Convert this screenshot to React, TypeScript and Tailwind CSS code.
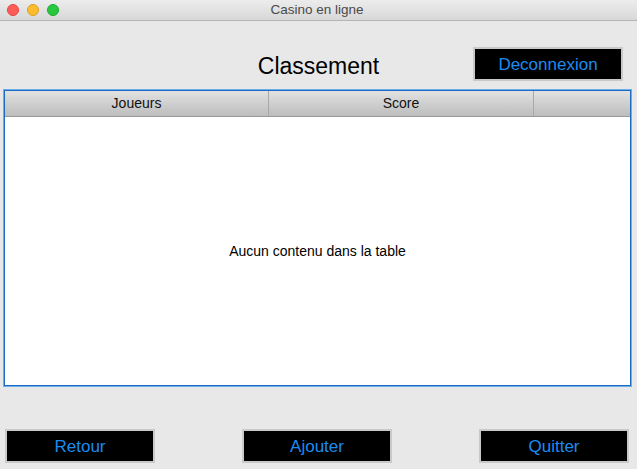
import React from 'react';

const ActionButton: React.FC<{ label: string; className?: string }> = ({ label, className = '' }) => (
  <button
    type="button"
    className={`w-[150px] h-[34px] bg-black border-2 border-[#c9c9c9] text-[#1a8cf0] text-[17px] leading-none ${className}`}
  >
    {label}
  </button>
);

const App: React.FC = () => {
  return (
    <div className="w-[637px] h-[469px] bg-[#e8e8e8] flex flex-col overflow-hidden font-['Liberation_Sans',Arial,sans-serif]">
      {/* barre de titre */}
      <div className="h-[21px] shrink-0 flex items-center px-[7px] bg-gradient-to-b from-[#ececec] to-[#d8d8d8] border-b border-[#b4b4b4] relative">
        <div className="flex gap-[8px]">
          <span className="w-[12px] h-[12px] rounded-full bg-[#fc5b57] border border-[#e2463f]" />
          <span className="w-[12px] h-[12px] rounded-full bg-[#fdbc2e] border border-[#df9f1f]" />
          <span className="w-[12px] h-[12px] rounded-full bg-[#28c840] border border-[#1aab29]" />
        </div>
        <span className="absolute inset-x-0 text-center text-[13.5px] text-[#4a4a4a] pr-[3px]">Casino en ligne</span>
      </div>

      {/* en-tête */}
      <div className="h-[68px] shrink-0 grid grid-cols-[1fr_auto_1fr] items-end">
        <div />
        <h1 className="text-[23px] leading-[25px] text-black mb-[10px]">Classement</h1>
        <div className="flex justify-end pr-[14px] pb-[8px]">
          <ActionButton label="Deconnexion" className="h-[33px]" />
        </div>
      </div>

      {/* table */}
      <div className="ml-[3px] mr-[5px] h-[298px] shrink-0 border border-[#6aaeea] flex flex-col">
        <div className="flex-1 border border-[#1b6bc2] bg-white flex flex-col">
          <div className="h-[26px] shrink-0 flex bg-gradient-to-b from-[#e2e2e2] to-[#bdbdbd] border-b border-[#9a9a9a] text-[14px] text-[#111]">
            <div className="w-[264px] flex items-center justify-center border-r border-[#a8a8a8]">Joueurs</div>
            <div className="w-[265px] flex items-center justify-center border-r border-[#a8a8a8]">Score</div>
            <div className="flex-1" />
          </div>
          <div className="flex-1 flex items-center justify-center text-[14px] text-black">
            Aucun contenu dans la table
          </div>
        </div>
      </div>

      {/* boutons du bas */}
      <div className="flex-1 flex items-end justify-between pl-[5px] pr-[8px] pb-[6px]">
        <ActionButton label="Retour" />
        <ActionButton label="Ajouter" />
        <ActionButton label="Quitter" />
      </div>
    </div>
  );
};

export default App;
